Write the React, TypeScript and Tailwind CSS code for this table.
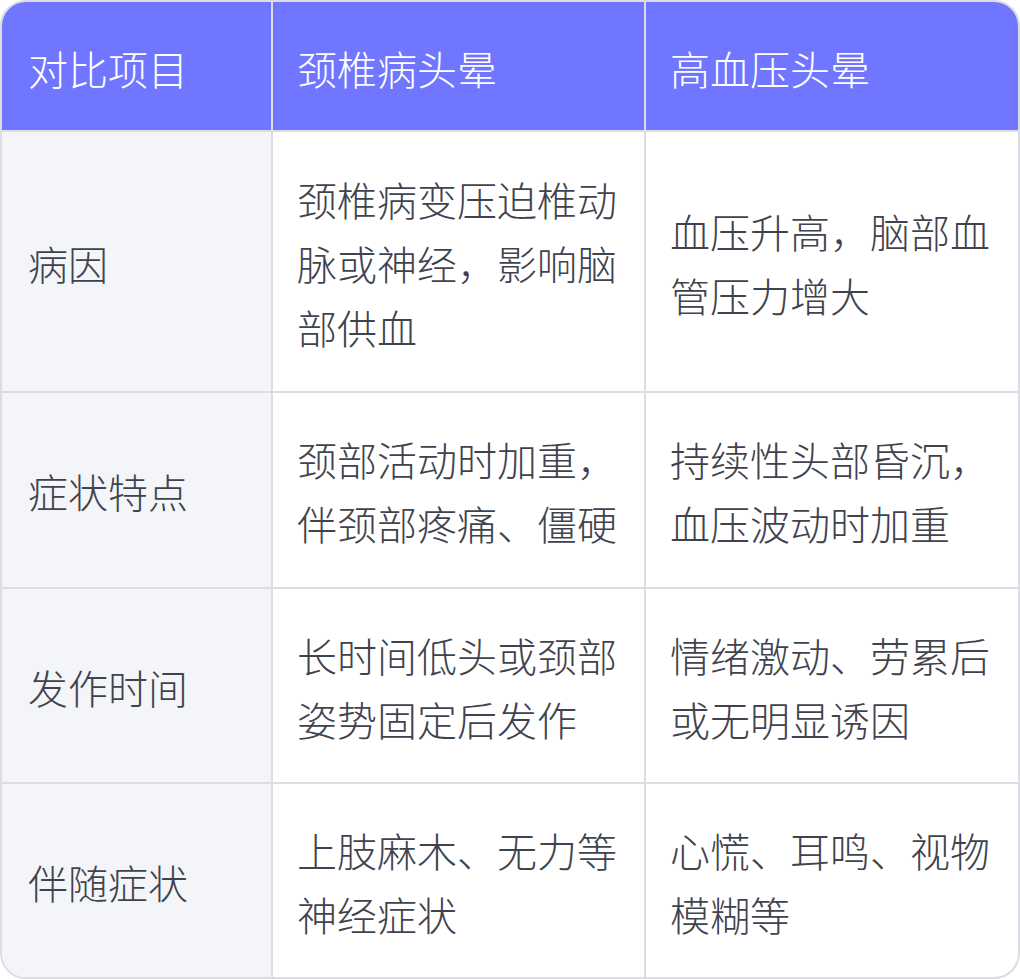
import React from 'react';

const rows = [
  {
    label: '病因',
    cervical: '颈椎病变压迫椎动脉或神经，影响脑部供血',
    hypertension: '血压升高，脑部血管压力增大',
    height: 'h-[261px]',
  },
  {
    label: '症状特点',
    cervical: '颈部活动时加重，伴颈部疼痛、僵硬',
    hypertension: '持续性头部昏沉，血压波动时加重',
    height: 'h-[196px]',
  },
  {
    label: '发作时间',
    cervical: '长时间低头或颈部姿势固定后发作',
    hypertension: '情绪激动、劳累后或无明显诱因',
    height: 'h-[195px]',
  },
  {
    label: '伴随症状',
    cervical: '上肢麻木、无力等神经症状',
    hypertension: '心慌、耳鸣、视物模糊等',
    height: 'h-[193px]',
  },
];

const font = { fontFamily: '"Noto Sans CJK SC", "Noto Sans", sans-serif' };

export default function App() {
  return (
    <div className="w-[1020px] h-[979px] bg-white" style={font}>
      <div className="h-full rounded-[26px] border-2 border-[#dcdde2] overflow-hidden">
        <div className="grid grid-cols-[271px_373px_1fr] text-[40px] leading-[64px] font-light">
          {/* header */}
          <div className="h-[130px] bg-[#7076ff] text-white flex items-center pl-[26px] pt-[3px] border-r-2 border-b-2 border-[#dcdde2]">
            对比项目
          </div>
          <div className="h-[130px] bg-[#7076ff] text-white flex items-center pl-[24px] pt-[3px] border-r-2 border-b-2 border-[#dcdde2]">
            颈椎病头晕
          </div>
          <div className="h-[130px] bg-[#7076ff] text-white flex items-center pl-[24px] pt-[3px] border-b-2 border-[#dcdde2]">
            高血压头晕
          </div>

          {rows.map((r, i) => {
            const last = i === rows.length - 1;
            const bottom = last ? '' : 'border-b-2';
            return (
              <React.Fragment key={r.label}>
                <div className={`${r.height} ${bottom} bg-[#f4f5f9] text-[#40434d] flex items-center pl-[26px] pt-[2px] border-r-2 border-[#dcdde2]`}>
                  {r.label}
                </div>
                <div className={`${r.height} ${bottom} text-[#40434d] flex items-center pl-[24px] pr-[20px] pt-[2px] border-r-2 border-[#dcdde2]`}>
                  <p>{r.cervical}</p>
                </div>
                <div className={`${r.height} ${bottom} text-[#40434d] flex items-center pl-[24px] pr-[18px] pt-[2px] border-[#dcdde2]`}>
                  <p>{r.hypertension}</p>
                </div>
              </React.Fragment>
            );
          })}
        </div>
      </div>
    </div>
  );
}
